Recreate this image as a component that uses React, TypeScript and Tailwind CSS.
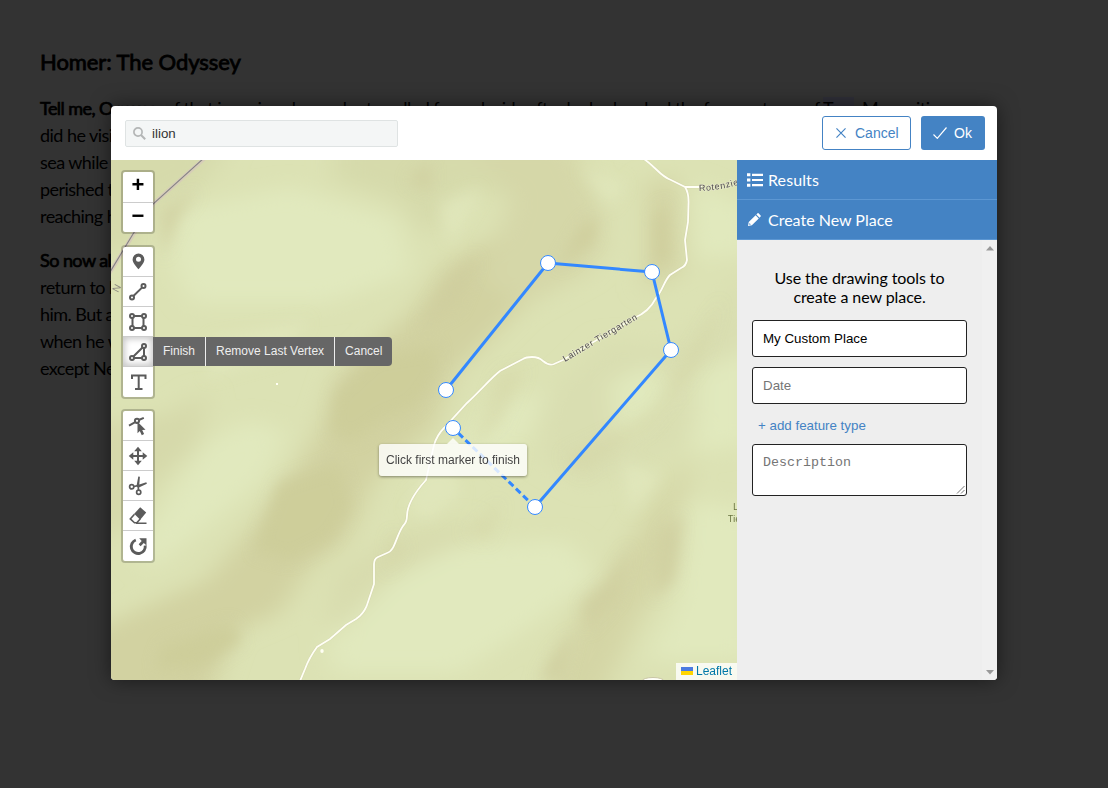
import React from 'react';

const stroke = { fill: 'none', stroke: '#5b5b5b', strokeWidth: 2 } as const;

function Icon({ children }: { children: React.ReactNode }) {
  return <svg width="18" height="18" viewBox="0 0 18 18" className="mr-px block overflow-visible">{children}</svg>;
}

const drawIcons = [
  <Icon key="m"><path fill="#5b5b5b" fillRule="evenodd" transform="translate(.5 -.8)" d="M9 1.300a5.900 5.900 0 0 0-5.900 5.900C3.100 10.600 6.600 14 9 17c2.400-3 5.900-6.400 5.900-9.800A5.900 5.900 0 0 0 9 1.300zM9 4.600a2.500 2.500 0 1 1 0 5a2.500 2.500 0 0 1 0-5z" /></Icon>,
  <Icon key="l"><g {...stroke}><circle cx="14.500" cy="3" r="2" /><circle cx="3" cy="14.500" r="2" /><path d="M13 4.600L4.400 13" /></g></Icon>,
  <Icon key="r"><g {...stroke}><circle cx="3" cy="3" r="2" /><circle cx="15" cy="3" r="2" /><circle cx="3" cy="15" r="2" /><circle cx="15" cy="15" r="2" /><path d="M5 3h8M5 15h8M3.500 5v8M14.500 5v8" /></g></Icon>,
  <Icon key="p"><g {...stroke}><circle cx="15" cy="3" r="2" /><circle cx="3" cy="15" r="2" /><circle cx="15" cy="15" r="2" /><path d="M5 15h8M15 5v8M13.500 4.500L4.400 13.500" /></g></Icon>,
  <Icon key="t"><path {...stroke} d="M3 6V2.500h13.500V6M9.700 2.500v13.600M6 16.100h7.500" /></Icon>,
];

const editIcons = [
  <Icon key="e"><g {...stroke}><circle cx="8" cy="3.800" r="2.100" /><path d="M0 8.600L6.200 5.100M9.800 3L14.800.800" /></g><path fill="#5b5b5b" d="M8.500 4.800l8 8-3.300.3 1.900 4-2.300 1.100-2-4.200-2.300 2.200z" /></Icon>,
  <Icon key="d"><path {...stroke} d="M9 2v14M2 9h14" /><path fill="#5b5b5b" d="M9-.3l3.800 4.600H5.200zM9 18.300l3.800-4.600H5.200zM-.3 9l4.600-3.800v7.600zM18.300 9l-4.600-3.800v7.600z" /></Icon>,
  <Icon key="c"><g {...stroke} strokeWidth="1.700"><circle cx="2.700" cy="9.800" r="2.100" /><circle cx="9.700" cy="15.200" r="2.100" /><path d="M4.800 9.500L9 8.600M9.500 13L9.100 8" /></g><path fill="#5b5b5b" d="M9.300-.5l1.600.3L10.300 7.600l7-2.300.6 1.500-8 3.700-1.800-.5-.4-2z" /></Icon>,
  <Icon key="x"><path fill="#5b5b5b" d="M5.200 6.700L11.200.200l6 5.300-6 7.200z" /><path {...stroke} strokeWidth="1.600" d="M5.500 7.200L1.300 11.900l4.200 3.900h2.300l3.400-3.800M7 16.200h10.500" /></Icon>,
  <Icon key="o"><path {...stroke} strokeWidth="2.900" d="M6.800 3A7 7 0 1 0 16.200 8.500" /><path fill="#5b5b5b" d="M10.200 1.200H17.500V8.500L14.800 6 11.600 9.200 9.700 7.300 12.700 4z" /></Icon>,
];

function Toolbar({ icons, active }: { icons: React.ReactNode[]; active?: number }) {
  return (
    <div className="w-[34px] rounded-[4px] border-2 border-black/20 bg-white bg-clip-padding">
      {icons.map((icon, i) => (
        <div key={i} className={'relative flex h-[30px] items-center justify-center border-[#ccc] ' + (i < icons.length - 1 ? 'border-b ' : '') + (i === active ? 'shadow-[inset_0_0_6px_2px_rgba(0,0,0,0.22)]' : '')}>
          {icon}
          {i === active && (
            <div className="absolute left-[30px] top-0 flex h-[29px] whitespace-nowrap text-[12px] leading-[29px] text-[#eee]">
              <span className="border-r border-[#eee] bg-[#666] px-[10px]">Finish</span>
              <span className="border-r border-[#eee] bg-[#666] px-[10px]">Remove Last Vertex</span>
              <span className="rounded-r-[4px] bg-[#666] px-[10px]">Cancel</span>
            </div>
          )}
        </div>
      ))}
    </div>
  );
}

const vertices = [[335, 230], [437, 103], [541, 112], [560, 190], [424, 347], [342, 268]];
const road = 'M533 -1C546 8 549 16 560 20L574 27Q578 33 577.500 44L577 62L574 80L576 100Q575 106 570 108L559 115C553 121 552 130 545 138Q538 152 523 158L452 200L443 204Q438 206 432 201Q428 197 421 197Q415 197 412 199L389 211C380 218 370 230 356 243L333 268Q326 275 323 285L315 320C306 330 296 344 296 356Q296 362 292 366C285 376 284 391 276 393L267 397Q263 399 263 404V424L257 442Q254 453 245 459L235 465L219 479L206 487Q198 498 194 509L189 521M574 27h17';

function Terrain() {
  return (
    <svg className="absolute left-0 top-0" width="626" height="520" viewBox="0 0 626 520">
      <defs>
        <filter id="b1" x="-20%" y="-20%" width="140%" height="140%"><feGaussianBlur stdDeviation="32 30" /></filter>
        <filter id="b2" x="-20%" y="-20%" width="140%" height="140%"><feGaussianBlur stdDeviation="17 22" /></filter>
      </defs>
      <rect width="626" height="520" fill="#dce2b4" />
      <g transform="scale(0.39923 0.33333)">
        <g filter="url(#b1)">
          <path fill="#d2d2a1" d="M-60 1640V1420L240 1260L400 1040L520 820L570 640L760 450L840 310L960 230L1180 170L1240 260L1130 350L1020 450L860 640L810 800L660 960L590 1140L500 1220L420 1360L300 1420L240 1640z" />
          <path fill="#d6daab" d="M-60-60H300L240 60L120 130L60 260L-60 300zM560-60H1120L1060 120L880 80L790 240L720 120L560 60z" />
          <path fill="#d6d9aa" d="M-60 800L150 760L240 690L220 860L120 960L40 1100L-60 1140z" />
          <path fill="#d5d7a8" d="M900-60H1150L1240 180L1200 330L1030 440L930 350L1000 120z" />
          <path fill="#d4d5a5" d="M1340 60H1430V330L1340 400zM1080 1640L1160 1390L1240 1250L1380 1000L1450 880L1420 1200L1320 1380L1220 1640z" />
          <path fill="#d9deb1" d="M1080 720L1240 540L1400 560L1520 440L1600 300V560L1420 860L1200 980L1080 900z" />
          <path fill="#d8dcae" d="M560 1240L720 1120L900 1080L880 1180L740 1300L660 1420L540 1400z" />
          <path fill="#e1e9be" d="M170 150L450 80L720 180L750 340L540 430L200 430L150 300zM230 850L350 780L440 820L390 950L260 1080L100 1230L60 1180zM860 850L960 730L1100 690L1030 850L900 900zM700 1260L860 1160L1140 1140L1220 1250L1050 1400L870 1540L560 1540L540 1450z" />
          <path fill="#e1e9bd" d="M1250 670L1360 610L1400 700L1280 860zM1470 640L1600 560V850L1460 880zM1430 1020L1600 1050V1500H1340L1420 1330zM1440 60L1600 140V280L1460 300z" />
        </g>
        <g filter="url(#b2)">
          <path fill="#cecd9a" d="M560 700L660 590L820 560L810 660L760 740L680 780L610 840L550 820zM420 970L570 910L600 1040L550 1140L450 1200L360 1170zM130 1460L300 1390L330 1440L230 1520L110 1530z" opacity=".95" />
          <path fill="#cfce9c" d="M1180 200L1215 170L1210 240L1120 320zM1360 170L1390 130L1400 290L1360 330z" />
          <path fill="#cfce9d" d="M125 150L220 90L170 170L130 290zM740 60L800 10L800 90zM840 360L920 290L870 440L770 500zM1180 1330L1250 1260L1300 1160L1270 1310L1190 1410zM1380 1120L1430 1060L1410 1260L1360 1310zM1110 1480L1160 1420L1130 1560H1070z" opacity=".75" />
          <path fill="#d2d3a3" d="M1130 890L1240 830L1360 750L1530 420L1480 600L1350 800L1180 940zM880 1120L980 1020L950 1140zM970 640L1040 620L980 790L900 870zM700 1120L740 1160L690 1240z" opacity=".4" />
          <path fill="#e2eabf" d="M820 130L930 90L850 250zM1170 20L1290 70L1250 140zM850 920L880 1000L790 1080L740 1040L780 930zM960 930L1030 860L1010 940zM1280 900L1380 950L1300 1060zM250 540L500 480L420 590L240 650z" opacity=".6" />
        </g>
      </g>
      <g fill="none">
        <path d="M94-2L43 43L22 75L-2 114" stroke="#d6cdb8" strokeWidth="4" />
        <path d="M93-2L42 44L22 74L-1 112" stroke="#858286" strokeWidth="1.100" />
        <path d={road} stroke="#c9c79f" strokeWidth="2.600" opacity=".5" />
        <path d={road} stroke="#fffff6" strokeWidth="1.800" />
      </g>
      <rect x="165" y="223" width="2" height="2" fill="#fffff4" />
      <ellipse cx="211" cy="491" rx="1.700" ry="2" fill="#fffff4" />
      <ellipse cx="542" cy="521" rx="11" ry="3.500" fill="#fffff8" stroke="#c8c5a5" />
      <defs>
        <path id="roadname" d="M454 202L529 157.500" />
        <path id="roadname2" d="M588 31Q610 31 640 21" />
      </defs>
      <g fontFamily="Liberation Sans, Arial, sans-serif" fontSize="9" fill="#504c50" letterSpacing=".7" stroke="#e8eacb" strokeWidth="1.200" style={{ paintOrder: 'stroke' }}>
        <text><textPath href="#roadname">Lainzer Tiergarten</textPath></text>
        <text><textPath href="#roadname2">Rotenziegel</textPath></text>
      </g>
      <text fontFamily="Liberation Sans, Arial, sans-serif" fontSize="10" fill="#8b887f" transform="translate(7 133) rotate(-62)">N</text>
      <g fontFamily="Noto Sans, sans-serif" fontSize="9" fill="#68733f">
        <text x="622" y="350">L</text><text x="617" y="362">Tie</text>
      </g>
      <path d="M335 230L437 103L541 112L560 190L424 347" stroke="#3388ff" strokeWidth="3" fill="none" strokeLinejoin="round" />
      <path d="M424 347L342 268" stroke="#3388ff" strokeWidth="3" strokeDasharray="6.500 3.500" />
      {vertices.map(([x, y]) => <circle key={x} cx={x} cy={y} r="7.500" fill="#fff" stroke="#3388ff" />)}
    </svg>
  );
}

function Arrow({ down }: { down?: boolean }) {
  return <svg width="8" height="5" viewBox="0 0 8 5"><path fill="#999" d={down ? 'M0 0h8L4 4.500z' : 'M0 4.500h8L4 0z'} /></svg>;
}

export default function App() {
  return (
    <div className="relative h-[788px] w-[1108px] overflow-hidden bg-[#333] font-[Lato,sans-serif] text-black">
      <div className="whitespace-nowrap px-10 pt-[47px] text-[18px] leading-[27px] tracking-[-0.55px]">
        <h1 className="mb-[18px] text-[22px] leading-[30px] tracking-[-0.08px] [-webkit-text-stroke:0.8px_black]">Homer: The Odyssey</h1>
        <p><span className="[-webkit-text-stroke:0.7px_black]">Tell me, O muse,</span> of that ingenious hero who travelled far and wide after he had sacked the famous town of <span className="bg-[#2f2f38]">Troy</span>. Many cities<br />did he visit, and many were<br />sea while trying to save<br />perished through their own<br />reaching home.</p>
        <p className="mt-[17px]"><span className="[-webkit-text-stroke:0.7px_black]">So now all</span> who escaped<br />return to his wife and country<br />him. But as years went by<br />when he was among his own<br />except Neptune</p>
      </div>
      <div className="absolute left-[111px] top-[106px] flex h-[574px] w-[886px] flex-col overflow-hidden rounded-[4px] bg-white font-['Liberation_Sans',Arial,sans-serif] shadow-[0_0_20px_rgba(0,0,0,0.5)]">
        <header className="flex h-[54px] shrink-0 items-center pl-[14px] pr-3">
          <div className="flex h-[27px] w-[273px] items-center rounded-[2px] border border-[#dfe3e3] bg-[#f4f6f6] pl-[7px] text-[13.330px] text-[#333]">
            <svg width="13" height="13" viewBox="0 0 13 13" fill="none" stroke="#b4b6b6"><circle cx="5" cy="5" r="4.100" strokeWidth="1.700" /><path d="M8 8l4.200 4.200" strokeWidth="2" /></svg>
            <span className="ml-[6px] pt-px">ilion</span>
          </div>
          <div className="ml-auto flex gap-[10px] text-[14px]">
            <div className="flex h-[34px] w-[89px] items-center rounded-[3px] border border-[#4483c4] pl-[13px] text-[#4483c4]">
              <svg width="10" height="10" viewBox="0 0 11 11" fill="none" stroke="currentColor" strokeWidth="1.300"><path d="M.5.500l10 10M10.500.500l-10 10" /></svg>
              <span className="ml-[9px]">Cancel</span>
            </div>
            <div className="flex h-[34px] w-[64px] items-center rounded-[3px] bg-[#4483c4] pl-3 text-white">
              <svg width="14" height="12" viewBox="0 0 14 12" fill="none" stroke="currentColor" strokeWidth="1.200"><path d="M.5 7.500l3.800 3.800L13.500.500" /></svg>
              <span className="ml-[7px]">Ok</span>
            </div>
          </div>
        </header>
        <main className="flex min-h-0 flex-1">
          <section className="relative h-[520px] w-[626px] overflow-hidden">
            <Terrain />
            <div className="relative flex flex-col pl-[10px] pt-[10px]">
              <div className="mb-[11px] h-[64px] w-[34px] rounded-[4px] border-2 border-black/20 bg-white bg-clip-padding text-center text-[22px] font-bold">
                <div className="h-[31px] border-b border-[#ccc] leading-[25px]">+</div>
                <div className="h-[29px] leading-[25px]">−</div>
              </div>
              <Toolbar icons={drawIcons} active={3} />
              <div className="h-[10px]" />
              <Toolbar icons={editIcons} />
            </div>
            <div className="absolute left-[268px] top-[284px] h-[32px] w-[148px] rounded-[3px] bg-white/80 text-center text-[12px] leading-[32px] text-[#444] shadow-[0_1px_3px_rgba(0,0,0,0.4)]">
              <svg className="absolute left-[68px] top-[-6px]" width="12" height="6"><path fill="#fff" fillOpacity=".8" d="M0 6L6 0l6 6z" /></svg>
              Click first marker to finish
            </div>
            <div className="absolute bottom-0 right-0 flex h-[17px] items-center bg-white/80 px-[5px] pb-px text-[12px] text-[#0078a8]">
              <svg className="mr-[3px]" width="12" height="8"><path fill="#4C7BE1" d="M0 0h12v4H0z" /><path fill="#FFD500" d="M0 4h12v4H0z" /></svg>Leaflet
            </div>
          </section>
          <aside className="flex w-[260px] flex-col bg-[#eee]">
            <div className="flex h-10 items-center border-b border-[#5c97d3] bg-[#4483c4] pl-[10px] font-[Lato,sans-serif] text-[16px] text-white">
              <svg width="16" height="14" viewBox="0 0 16 14" fill="currentColor"><path d="M0 .300h3.400v3H0zM0 5.500h3.400v3H0zM0 10.700h3.400v3H0zM5 .700h11v2.200H5zM5 5.900h11v2.200H5zM5 11.100h11v2.200H5z" /></svg>
              <span className="ml-[5px] tracking-[0.1px]">Results</span>
            </div>
            <div className="flex h-10 items-center border-b border-[#5c97d3] bg-[#4483c4] pl-[11px] font-[Lato,sans-serif] text-[16px] text-white">
              <svg width="13" height="13" viewBox="0 0 14 14" fill="currentColor"><path fillRule="evenodd" d="M0 14L.8 9.800L8.200 2.400L11.600 5.800L4.200 13.200zM1.600 10.900L1.300 12.700L3.100 12.400zM9 1.600L10.300.300Q10.800-.1 11.400.400L13.600 2.600Q14.100 3.200 13.600 3.700L12.400 5z" /></svg>
              <span className="ml-[7px]">Create New Place</span>
            </div>
            <div className="flex flex-1">
              <div className="flex w-[245px] flex-col px-[15px] pt-[28px] text-[13.330px]">
                <p className="text-center font-[Lato,sans-serif] text-[16px] leading-[19px] tracking-[-0.08px]">Use the drawing tools to<br />create a new place.</p>
                <div className="mt-[14px] h-[37px] rounded-[3px] border border-[#222] bg-white px-[10px] leading-[35px]">My Custom Place</div>
                <div className="mt-[10px] h-[37px] rounded-[3px] border border-[#222] bg-white px-[10px] leading-[35px] text-[#757575]">Date</div>
                <div className="h-10 pl-[6px] leading-[43px] text-[#4483c4]">+ add feature type</div>
                <div className="flex h-[52px] justify-between rounded-[3px] border border-[#222] bg-white pl-[10px] pt-[10px] font-['Liberation_Mono',monospace] leading-[15px] text-[#757575]">
                  Description
                  <svg className="mb-px mr-px self-end" width="9" height="9" fill="none" stroke="#555" strokeWidth=".8"><path d="M1 8.500L8.500 1M5 8.500L8.500 5" /></svg>
                </div>
              </div>
              <div className="flex w-[15px] flex-col items-center justify-between bg-[#f0f0f0] pb-[5px] pt-[6px]"><Arrow /><Arrow down /></div>
            </div>
          </aside>
        </main>
      </div>
    </div>
  );
}
